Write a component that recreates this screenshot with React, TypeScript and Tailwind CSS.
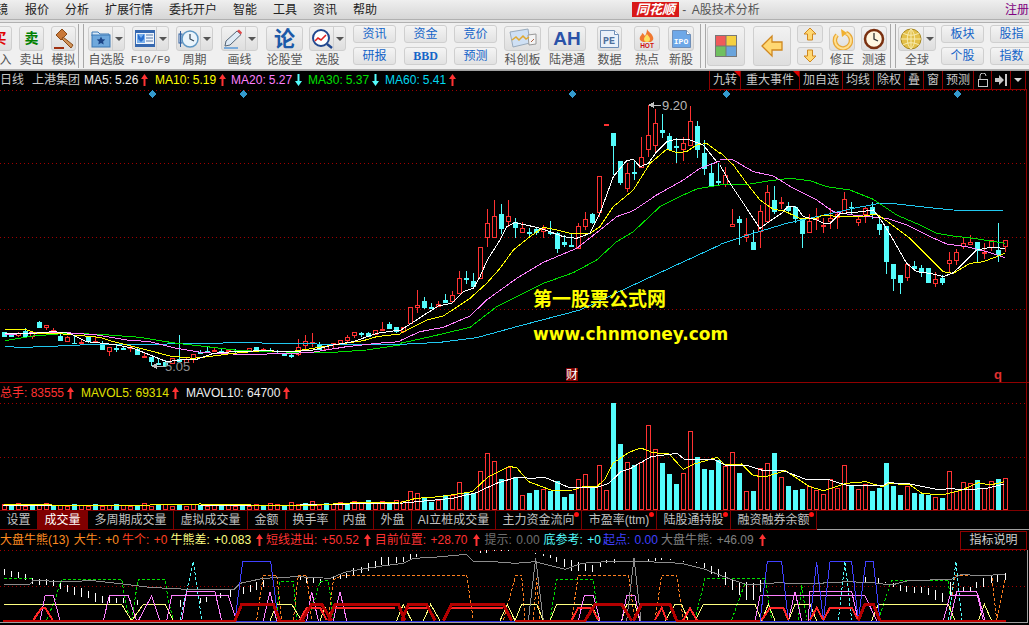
import type { ReactNode } from "react";

type Pt = [number, number];

// chart numbers were read off the reference crops, so they are kept in crop units
// a = frame of the left crop, b = middle, c = right, d/e = indicator crops
const a = (p: Pt[]) => p.map(([x, y]) => `${x / 3},${300 + y / 3}`).join(" ");
const b = (p: Pt[]) => p.map(([x, y]) => `${400 + x / 3},${90 + y / 3}`).join(" ");
const c = (p: Pt[]) => p.map(([x, y]) => `${720 + x / 3},${90 + y / 3}`).join(" ");
const d = (p: Pt[]) => p.map(([x, y]) => `${x / 3},${500 + y / 3}`).join(" ");
const e = (p: Pt[]) => p.map(([x, y]) => `${515 + x / 3},${500 + y / 3}`).join(" ");
const v = (p: Pt[]) => p.map(([x, y]) => `${400 + x / 2.49},${380 + y / 3}`).join(" ");

// [bodyTop, bodyBottom, wickTop, wickBottom, isRed]
type Candle = [number, number, number, number, number];

const LEFT: Candle[] = [
  [96,107,96,110,0],[105,108,98,112,0],[100,104,95,112,1],[92,108,85,110,0],[100,108,95,118,1],[66,80,63,82,0],
  [76,80,74,90,1],[91,94,84,95,1],[108,119,100,120,0],[112,124,108,124,1],[128,130,108,132,0],[126,130,118,130,1],
  [112,122,110,130,0],[122,123,110,125,1],[130,148,122,150,0],[142,152,142,168,1],[143,146,135,155,0],[143,146,138,148,0],
  [142,144,135,157,1],[148,161,142,163,0],[168,170,155,170,1],[172,183,170,198,0],[190,192,178,195,0],[186,194,180,200,0],
  [175,188,175,192,1],[178,183,105,185,0],[176,186,172,190,1],[162,178,162,188,1],[157,158,150,162,0],[154,155,140,157,0],
  [150,152,140,157,1],[153,155,148,158,0],[150,152,148,160,1],[152,154,148,162,0],[150,153,150,157,1],[143,150,143,157,1],
  [142,150,142,152,0],[148,150,145,153,1],[149,151,143,155,0],[152,154,150,158,0],[158,166,158,168,0],[166,168,160,175,0],
  [142,162,117,167,1],[124,136,105,148,1],[127,130,100,140,1],[136,146,126,150,0],[138,148,138,150,1],[130,132,128,148,1],
  [121,133,121,135,1],[112,120,105,125,1],[97,105,97,115,1],[99,101,97,112,0],[99,108,97,110,0],[91,102,91,105,1],
  [86,88,65,88,1],[72,84,66,88,0],[82,93,82,100,0],
];

const RIGHT: Candle[] = [
  [712,724,710,730,1],[652,700,650,700,1],[646,650,600,668,1],[633,652,620,658,0],[652,655,638,658,0],[642,648,633,652,1],
  [630,635,612,640,0],[615,632,603,640,1],[565,610,543,610,1],[565,568,543,582,0],[574,588,548,590,0],[470,565,470,565,1],
  [400,440,358,470,1],[378,440,330,442,1],[372,414,342,432,0],[379,392,330,410,1],[397,410,384,443,0],[415,425,395,425,1],
  [425,428,415,445,0],[417,426,412,435,0],[415,422,405,445,1],[425,430,393,434,0],[430,473,425,490,0],[456,462,436,470,0],
  [464,468,430,470,0],[409,475,400,475,1],[388,409,365,420,1],[372,396,368,402,0],[259,367,259,380,1],[102,104,102,104,1],
  [129,164,129,255,0],[213,276,213,286,0],[249,293,220,305,1],[245,248,212,270,0],[202,232,142,232,1],[136,176,45,200,1],
  [99,164,57,190,1],[120,126,72,145,0],[139,178,130,180,0],[168,172,145,218,0],[160,176,140,212,1],[94,164,48,165,1],
  [108,177,93,205,0],[189,235,150,255,0],[249,288,220,292,0],[274,277,220,285,0],[255,283,230,290,1],[403,407,357,407,1],
  [387,396,377,465,0],[432,442,385,455,1],[456,477,420,477,0],[364,424,345,473,1],[307,392,285,395,1],[330,364,288,372,0],
  [336,339,322,358,1],[348,360,336,372,0],[351,385,348,400,0],[388,428,385,473,0],[394,425,372,425,1],[384,388,354,420,1],
  [404,406,384,428,1],[385,393,355,417,1],[372,380,362,417,1],[328,370,306,372,1],[350,352,337,372,0],[388,395,375,408,1],
  [354,372,352,400,1],[352,372,335,387,0],[403,417,375,435,0],[408,513,408,552,0],[522,564,522,603,0],[555,576,555,612,0],
  [522,560,518,572,1],[528,535,513,542,0],[534,543,525,560,0],[534,576,534,576,0],[568,578,545,590,1],[564,575,555,585,0],
  [511,518,487,550,1],[487,509,478,525,1],[460,468,445,477,1],[457,462,435,465,1],[457,480,457,517,0],[487,490,460,507,1],
  [449,472,449,482,1],[480,492,400,515,0],[451,467,451,485,1],
];

const VOL_RIGHT: [number, number][] = [
  [362,1],[332,1],[338,1],[352,0],[366,0],[360,1],[346,0],[346,1],[307,1],[340,0],[338,0],[274,1],[220,1],[244,1],[297,0],
  [260,1],[292,0],[344,1],[339,0],[330,0],[327,1],[332,0],[304,0],[351,0],[342,0],[298,1],[283,1],[320,0],[256,1],[331,1],
  [70,0],[192,0],[247,1],[256,0],[247,1],[136,1],[208,1],[250,0],[282,0],[312,0],[280,1],[154,1],[232,0],[267,0],[270,0],
  [240,0],[258,1],[217,1],[279,0],[334,1],[333,0],[265,1],[250,1],[219,0],[292,1],[318,0],[330,0],[327,0],[318,1],[330,1],
  [343,1],[298,1],[323,1],[256,1],[316,0],[328,1],[313,1],[333,0],[324,0],[250,0],[318,0],[345,0],[319,1],[339,0],[342,0],
  [345,0],[352,1],[354,0],[274,1],[333,1],[307,1],[310,1],[300,0],[325,1],[304,1],[297,0],[295,1],
];

const VOL_LEFT = [5,4,6,3,5,4,6,3,4,3,5,4,3,5,3,4,5,4,3,4,6,3,4,5,3,4,3,5,4,3,4,3,5,3,4,3,5,4,6,5,4,7,5,6,8,4,6,5,7,6,8,7,9,6,8,7,9];

const STICKS_D: [number, number, number][] = [
  [14,207,225],[35,213,232],[56,215,235],[77,222,240],[98,235,252],[119,236,255],[140,238,256],[161,240,258],[182,248,268],
  [203,255,275],[224,262,285],[245,265,290],[266,272,295],[287,280,305],[308,288,308],[329,290,310],[350,293,310],[371,293,310],
  [392,300,312],[413,300,315],[540,300,320],[600,295,310],[620,290,305],[660,280,295],[690,270,290],[730,262,282],[750,255,275],
  [770,245,270],[790,240,260],[900,228,240],[920,235,250],[940,235,250],[960,238,250],[1000,228,240],[1020,222,238],[1040,218,235],
  [1060,205,225],[1085,200,220],[1105,190,212],[1125,182,205],[1145,172,195],[1165,172,195],[1190,172,190],[1210,170,187],
  [1230,162,178],[1250,162,172],[1440,152,160],[1460,150,158],[1482,150,154],[1503,150,153],[1524,150,153],
];

const STICKS_E: [number, number, number][] = [
  [20,158,160],[40,158,160],[60,160,163],[85,163,168],[105,165,175],[125,170,185],[148,178,200],[170,180,212],[190,185,212],
  [212,190,213],[232,195,215],[255,190,200],[275,180,188],[297,178,190],[400,178,185],[420,175,182],[440,175,180],[465,176,179],
  [505,183,186],[545,185,188],[568,190,205],[590,198,222],[610,208,232],[632,215,255],[652,235,270],[672,245,285],[693,245,300],
  [714,250,300],[735,240,275],[1050,232,245],[1090,235,248],[1110,245,250],[1135,250,262],[1155,255,272],[1175,258,275],
  [1197,262,278],[1218,262,280],[1240,265,285],[1262,270,300],[1283,280,305],[1305,245,285],[1345,262,275],[1365,260,272],
  [1385,245,265],[1405,235,262],[1428,228,250],[1448,225,245],[1470,220,240],
];

const CYAN = "#54fcfc";
const RED = "#ff3232";

function Bar({ x, y, bottom, red }: { x: number; y: number; bottom: number; red: number }) {
  const top = Math.round(y);
  return red ? (
    <rect x={x - 2} y={top + 0.5} width={4} height={Math.max(1, bottom - top - 1)} fill="#000" stroke={RED} />
  ) : (
    <rect x={x - 2.5} y={top} width={5} height={Math.max(1, bottom - top)} fill={CYAN} />
  );
}

function CandleMark({ k, data }: { k: number; data: { t: number; b: number; wt: number; wb: number; red: number } }) {
  const x = 403.5 + 7 * k;
  const color = data.red ? RED : CYAN;
  return (
    <g>
      <line x1={x} x2={x} y1={data.wt} y2={data.t} stroke={color} />
      <line x1={x} x2={x} y1={data.b} y2={data.wb} stroke={color} />
      <Bar x={x} y={data.t} bottom={Math.round(data.b) + 1} red={data.red} />
    </g>
  );
}

function Arrow({ down, color = "#ff3232" }: { down?: boolean; color?: string }) {
  return (
    <svg width="7" height="12" viewBox="0 0 7 12" className="shrink-0">
      <path d={down ? "M2.500 0h2v7H7L3.500 12 0 7h2.500z" : "M3.500 0 7 5H4.500v7h-2V5H0z"} fill={color} />
    </svg>
  );
}

function Tool({ w, className = "", label, icon, drop, mono }: { w: string; className?: string; label: string; icon: ReactNode; drop?: boolean; mono?: boolean }) {
  return (
    <div className={`flex shrink-0 flex-col items-center ${w} ${className}`}>
      <div className="mt-[3px] flex h-[25px] w-full items-center rounded-[3px] border border-[#cfcfcf] bg-gradient-to-b from-[#f2f2f2] to-[#dedede]">
        <div className="flex flex-1 items-center justify-center">{icon}</div>
        {drop && (
          <div className="flex h-full w-[12px] items-center justify-center border-l border-[#cfcfcf]">
            <div className="h-0 w-0 border-x-[4px] border-t-[4px] border-x-transparent border-t-[#555]" />
          </div>
        )}
      </div>
      <span className={`mt-[2px] whitespace-nowrap leading-[14px] text-[#555] ${mono ? "font-['Liberation_Mono',monospace] text-[11px]" : "text-[12px]"}`}>{label}</span>
    </div>
  );
}

function TextPair({ top, bottom, className = "", boldBottom }: { top: string; bottom: string; className?: string; boldBottom?: boolean }) {
  const box = "flex h-[18px] w-full items-center justify-center rounded-[3px] border border-[#cfcfcf] bg-gradient-to-b from-[#f4f4f4] to-[#e2e2e2] text-[12px] text-[#1464c8]";
  return (
    <div className={`mt-[2px] flex w-[43px] shrink-0 flex-col gap-[4px] ${className}`}>
      <div className={box}>{top}</div>
      <div className={`${box} ${boldBottom ? "font-['Liberation_Serif',serif] font-bold" : ""}`}>{bottom}</div>
    </div>
  );
}

function Grip({ className = "" }: { className?: string }) {
  return <div className={`mt-[1px] h-[44px] w-[6px] shrink-0 border-x border-[#a8a8a8] ${className}`} />;
}

const Folder = () => (
  <svg width="20" height="18" viewBox="0 0 20 18">
    <path d="M1 2h6l2 2h9v2H1z" fill="#d8e8f6" stroke="#3b78b5" />
    <rect x="1" y="5" width="18" height="12" fill="#6fa8dc" stroke="#3b78b5" />
    <path d="M10 6.500l1.300 2.700 3 .4-2.200 2 .6 3L10 13.100l-2.700 1.500.6-3-2.200-2 3-.4z" fill="#1c4587" />
  </svg>
);
const DocWin = () => (
  <svg width="20" height="17" viewBox="0 0 20 17">
    <rect x="0.500" y="0.500" width="19" height="16" fill="#eef4fb" stroke="#3568b0" />
    <rect x="1" y="1" width="18" height="2" fill="#3568b0" />
    <path d="M2 4h8v9H2z" fill="#7ab0ec" />
    <path d="M3 4l3 4 3-4v5l-3 3-3-3z" fill="#2a70d0" />
    <path d="M11 5h7M11 8h7M11 11h7" stroke="#5578a8" />
    <rect x="1" y="14" width="18" height="2" fill="#3568b0" />
  </svg>
);
const ClockIcon = () => (
  <svg width="21" height="20" viewBox="0 0 21 20">
    <rect x="1" y="5" width="3" height="9" fill="#fff" stroke="#2f5f9f" />
    <path d="M2.500 2v16" stroke="#2f5f9f" />
    <circle cx="12" cy="10" r="8" fill="#eaf4fb" stroke="#5e97c4" strokeWidth="1.500" />
    <path d="M12 5v5l4 2" stroke="#345" strokeWidth="1.200" fill="none" />
  </svg>
);
const PencilIcon = () => (
  <svg width="21" height="20" viewBox="0 0 21 20">
    <path d="M2 17l1-5L14 2l4 3.500L7 16z" fill="#dfeaf5" stroke="#567" />
    <path d="M14 2l4 3.500 1-2-3-3z" fill="#e04848" />
    <path d="M1 19h14" stroke="#5a9ad8" strokeWidth="1.500" />
  </svg>
);
const SearchIcon = () => (
  <svg width="22" height="21" viewBox="0 0 22 21">
    <circle cx="10" cy="10" r="8" fill="#fff" stroke="#21478f" strokeWidth="2" />
    <path d="M4 13l3-3 3 2 5-5" stroke="#e02020" strokeWidth="1.600" fill="none" />
    <path d="M16 16l5 4" stroke="#21478f" strokeWidth="2.500" />
  </svg>
);
const Gavel = () => (
  <svg width="22" height="22" viewBox="0 0 22 22">
    <path d="M3 7l6-6 5 5-6 6z" fill="#c87838" stroke="#8a4a18" />
    <path d="M10 9l10 8-2 3-9-9z" fill="#d0955a" stroke="#8a4a18" />
    <rect x="1" y="19" width="10" height="2" fill="#a03010" />
  </svg>
);
const ChartCard = () => (
  <svg width="28" height="21" viewBox="0 0 28 21">
    <path d="M1 4l18-3 2 14-17 4z" fill="#cfe0f4" stroke="#9ab" />
    <path d="M19 7l8-1v10l-7 1z" fill="#f4f4f4" stroke="#999" />
    <path d="M3 12l4-3 3 3 4-4 3 3 3-2" stroke="#e0a830" fill="none" strokeWidth="1.500" />
    <path d="M22 14l3-3" stroke="#b06040" />
  </svg>
);
const PageIcon = ({ children, fill, ink, size }: { children: string; fill: string; ink: string; size: number }) => (
  <svg width="21" height="20" viewBox="0 0 21 20">
    <path d="M1.500 1.500h14l4 4v13h-18z" fill={fill} stroke="#6f8fb8" />
    <path d="M15.500 1.500v4h4" fill="#fff" stroke="#6f8fb8" />
    <text x="10" y="15" textAnchor="middle" fill={ink} fontSize={size} fontWeight="bold" fontFamily="Liberation Mono">{children}</text>
  </svg>
);
const Hot = () => (
  <svg width="18" height="21" viewBox="0 0 18 21">
    <path d="M9 1c1 3 5 4 6 8 1 3-1 4-2 5H5c-2-1-4-2-3-5 1-2 2-2 2-4 2 1 2 2 3 3 1-2 2-4 2-7z" fill="#f07830" />
    <path d="M9 6c1 2 3 3 3 5s-1 3-3 3-3-1-3-3 2-3 3-5z" fill="#fce060" />
    <text x="9" y="20" textAnchor="middle" fill="#d01010" fontSize="6.500" fontWeight="bold" fontFamily="Liberation Sans">HOT</text>
  </svg>
);
const ColorGrid = () => (
  <svg width="22" height="22" viewBox="0 0 22 22">
    <rect x="0" y="0" width="22" height="22" fill="#777" />
    <rect x="1" y="1" width="9.500" height="9.500" fill="#f05a5a" />
    <rect x="11.500" y="1" width="9.500" height="9.500" fill="#f5d040" />
    <rect x="1" y="11.500" width="9.500" height="9.500" fill="#70c060" />
    <rect x="11.500" y="11.500" width="9.500" height="9.500" fill="#6aa4dc" />
  </svg>
);
const GoldArrow = ({ dir }: { dir: "left" | "up" | "down" }) => {
  if (dir === "left")
    return (
      <svg width="22" height="24" viewBox="0 0 22 24">
        <path d="M1 12 11 2v6h10v8H11v6z" fill="#ffd873" stroke="#d08820" strokeWidth="1.300" />
      </svg>
    );
  return (
    <svg width="14" height="14" viewBox="0 0 14 14">
      <path d={dir === "up" ? "M7 1l6 6H9.500v6h-5V7H1z" : "M7 13l6-6H9.500V1h-5v6H1z"} fill="#ffd873" stroke="#d08820" />
    </svg>
  );
};
const Refresh = () => (
  <svg width="22" height="22" viewBox="0 0 22 22">
    <path d="M6 7a8 8 0 1 0 9-2" fill="none" stroke="#e8a838" strokeWidth="4.500" />
    <path d="M6 7a8 8 0 1 0 9-2" fill="none" stroke="#ffe090" strokeWidth="2" />
    <path d="M10 1l6 4-5 4z" fill="#f0b030" />
  </svg>
);
const BrownClock = () => (
  <svg width="22" height="22" viewBox="0 0 22 22">
    <circle cx="11" cy="11" r="9" fill="#fff6e0" stroke="#7a3010" strokeWidth="2.500" />
    <path d="M11 5v6l4 2" stroke="#333" strokeWidth="1.300" fill="none" />
  </svg>
);
const Globe = () => (
  <svg width="22" height="22" viewBox="0 0 22 22">
    <circle cx="11" cy="11" r="10" fill="#e3c04a" stroke="#a88820" />
    <path d="M1 11h20M11 1v20M3 5c5 3 11 3 16 0M3 17c5-3 11-3 16 0M11 1c-5 5-5 15 0 20M11 1c5 5 5 15 0 20" stroke="#f8ecb0" fill="none" />
  </svg>
);

const MENU = ["报价", "分析", "扩展行情", "委托开户", "智能", "工具", "资讯", "帮助"];

const MA = [
  { name: "MA5", value: "5.26", color: "text-[#f0f0f0]", w: "w-[66px]", down: false },
  { name: "MA10", value: "5.19", color: "text-[#ffff00]", w: "w-[71px]", down: false },
  { name: "MA20", value: "5.27", color: "text-[#ff80ff]", w: "w-[72px]", down: true },
  { name: "MA30", value: "5.37", color: "text-[#00e000]", w: "w-[72px]", down: true },
  { name: "MA60", value: "5.41", color: "text-[#00d8f0]", w: "w-[72px]", down: false },
];

const CHART_TABS = [
  { label: "九转", w: "w-[31px]", mark: true },
  { label: "重大事件", w: "w-[59px]", mark: true },
  { label: "加自选", w: "w-[43px]" },
  { label: "均线", w: "w-[31px]" },
  { label: "除权", w: "w-[31px]" },
  { label: "叠", w: "w-[19px]" },
  { label: "窗", w: "w-[19px]" },
  { label: "预测", w: "w-[31px]" },
];

const BOTTOM_TABS = [
  { label: "设置", w: "w-[38px]" },
  { label: "成交量", w: "w-[50px]", active: true },
  { label: "多周期成交量", w: "w-[86px]" },
  { label: "虚拟成交量", w: "w-[74px]" },
  { label: "金额", w: "w-[38px]" },
  { label: "换手率", w: "w-[50px]" },
  { label: "内盘", w: "w-[38px]" },
  { label: "外盘", w: "w-[38px]" },
  { label: "AI立桩成交量", w: "w-[84px]" },
  { label: "主力资金流向", w: "w-[86px]", dot: true },
  { label: "市盈率(ttm)", w: "w-[75px]", dot: true },
  { label: "陆股通持股", w: "w-[74px]", dot: true },
  { label: "融资融券余额", w: "w-[86px]", dot: true },
];

const Grid = ({ ys }: { ys: number[] }) => (
  <>
    {ys.map((y) => (
      <line key={y} x1="0" x2="1026" y1={y + 0.5} y2={y + 0.5} stroke="#a00000" strokeDasharray="1 3" />
    ))}
  </>
);

const Line = ({ pts, color, w = 1, dash }: { pts: string; color: string; w?: number; dash?: string }) => (
  <polyline points={pts} fill="none" stroke={color} strokeWidth={w} strokeDasharray={dash} />
);

function MainChart() {
  return (
    <svg viewBox="0 89 1029 293" shapeRendering="crispEdges" className="block h-[293px] w-full shrink-0">
      <Grid ys={[90, 163, 237, 309]} />
      {[152, 243, 572, 726, 957].map((x) => (
        <path key={x} d={`M${x} 90l4 4-4 4-4-4z`} fill="#3399cc" />
      ))}
      {LEFT.map((q, i) => (
        <CandleMark key={i} k={i - 57} data={{ t: 300 + q[0] / 3, b: 300 + q[1] / 3, wt: 300 + q[2] / 3, wb: 300 + q[3] / 3, red: q[4] }} />
      ))}
      {RIGHT.map((q, i) => (
        <CandleMark key={i} k={i} data={{ t: 90 + q[0] / 3, b: 90 + q[1] / 3, wt: 90 + q[2] / 3, wb: 90 + q[3] / 3, red: q[4] }} />
      ))}
      {/* MA60 */}
      <Line color="#20c8f0" pts={a([[14,140],[70,142],[130,140],[240,135],[350,133],[500,132],[620,130],[720,128],[850,130],[1000,133],[1200,133]])} />
      <Line color="#20c8f0" pts={b([[0,763],[120,757],[230,743],[350,710],[540,660],[700,585],[840,520],[960,465]])} />
      <Line color="#20c8f0" pts={c([[0,463],[100,430],[200,400],[300,378],[400,355],[480,340],[530,342],[620,352],[700,360],[850,362]])} />
      {/* MA30 */}
      <Line color="#00e000" pts={a([[14,122],[100,108],[200,100],[300,103],[420,112],[530,130],[620,140],[720,152],[850,156],[1000,157],[1100,150],[1200,135]])} />
      <Line color="#00e000" pts={b([[0,760],[100,738],[210,712],[290,650],[430,580],[520,548],[590,510],[650,455],[700,425],[780,350],[850,315],[890,297],[960,285]])} />
      <Line color="#00e000" pts={c([[0,283],[90,282],[150,272],[210,265],[270,272],[320,290],[390,300],[460,328],[530,375],[600,405],[650,430],[700,438],[760,445],[855,460]])} />
      {/* MA20 */}
      <Line color="#ff80ff" pts={a([[14,105],[100,98],[200,98],[290,105],[380,120],[450,125],[530,145],[610,158],[700,162],[800,162],[930,158],[1040,140],[1130,130],[1200,125]])} />
      <Line color="#ff80ff" pts={b([[0,752],[60,725],[130,712],[210,678],[260,630],[350,565],[430,517],[530,475],[600,420],[650,380],[700,362],[770,315],[850,270],[900,235],[960,213]])} />
      <Line color="#ff80ff" pts={c([[0,208],[40,210],[100,245],[160,258],[220,295],[290,330],[340,365],[400,375],[500,385],[560,405],[620,435],[680,462],[740,470],[800,485],[855,503]])} />
      {/* MA10 */}
      <Line color="#ffff00" pts={a([[14,88],[80,90],[110,100],[170,100],[220,105],[300,112],[340,125],[400,140],[460,155],[510,168],[580,175],[640,168],[700,160],[790,152],[870,155],[920,148],[1000,135],[1090,122],[1130,110],[1200,102]])} />
      <Line color="#ffff00" pts={b([[0,730],[80,690],[130,678],[210,625],[260,580],[300,535],[340,480],[390,440],[430,412],[470,420],[510,430],[570,430],[600,410],[640,350],[700,300],[750,220],[800,178],[830,188],[860,185],[890,165],[920,160],[960,190]])} />
      <Line color="#ffff00" pts={c([[0,187],[40,225],[80,280],[120,330],[160,358],[190,362],[240,385],[290,385],[310,375],[360,380],[420,380],[470,372],[510,400],[570,445],[620,495],[670,545],[700,550],[750,520],[790,515],[830,500],[855,490]])} />
      {/* MA5 */}
      <Line color="#ffffff" pts={a([[14,100],[60,100],[100,100],[160,95],[210,100],[260,125],[310,130],[350,135],[400,145],[450,165],[500,185],[540,180],[590,178],[640,160],[700,155],[790,152],[880,155],[940,150],[1000,135],[1060,125],[1130,100],[1200,90]])} />
      <Line color="#ffffff" pts={b([[0,722],[80,670],[115,648],[155,640],[190,605],[220,595],[240,560],[262,510],[300,450],[320,410],[345,398],[410,412],[450,425],[490,440],[530,445],[570,430],[600,370],[640,260],[680,212],[700,208],[720,230],[745,220],[770,185],[800,155],[830,147],[870,150],[910,165],[950,215]])} />
      <Line color="#ffffff" pts={c([[0,225],[30,280],[80,355],[120,415],[140,400],[185,370],[205,348],[230,352],[250,380],[290,390],[310,400],[330,400],[360,370],[400,368],[460,360],[490,400],[520,450],[560,520],[590,545],[630,550],[670,560],[700,548],[730,520],[770,480],[810,472],[855,475]])} />
      {/* high and low labels */}
      <path d="M649 105h12M649 105l4-2v4z" stroke="#c0c0c0" fill="#c0c0c0" />
      <text x="662" y="110" fill="#b8b8b8" fontSize="13" fontFamily="Liberation Sans">9.20</text>
      <path d="M152 366h13M152 366l4-2v4z" stroke="#c0c0c0" fill="#c0c0c0" />
      <text x="165" y="371" fill="#909090" fontSize="13" fontFamily="Liberation Sans">5.05</text>
      <rect x="566" y="368" width="12" height="13" fill="#800000" />
      <text x="566" y="379" fill="#fff" fontSize="12" fontFamily="Noto Sans CJK SC">财</text>
      <text x="994" y="379" fill="#e03030" fontSize="13" fontWeight="bold" fontFamily="Liberation Sans">q</text>
    </svg>
  );
}

function VolumeChart() {
  return (
    <svg viewBox="0 402 1029 108" shapeRendering="crispEdges" className="block h-[108px] w-full shrink-0">
      <Grid ys={[403, 457]} />
      {VOL_LEFT.map((h, i) => (
        <Bar key={i} x={403.5 + 7 * (i - 57)} y={509 - h} bottom={510} red={i % 3 !== 1 ? 1 : 0} />
      ))}
      {VOL_RIGHT.map(([top, red], i) => (
        <Bar key={i} x={403.5 + 7 * i} y={380 + top / 3} bottom={510} red={red} />
      ))}
      <polyline points="3,506 100,505 200,505 300,505 350,504 400,503" fill="none" stroke="#fff" />
      <polyline points="3,504 100,506 200,504 300,506 350,503 400,502" fill="none" stroke="#ff0" />
      <Line color="#ffff00" pts={v([[0,368],[40,355],[100,350],[180,335],[220,290],[270,260],[290,262],[320,305],[380,332],[430,330],[460,318],[490,320],[510,298],[530,250],[570,217],[600,204],[630,218],[670,222],[705,268],[730,253],[790,232],[810,255],[850,252],[880,287],[910,290],[960,272],[1020,320],[1055,332],[1110,310],[1160,305],[1200,320],[1220,310],[1270,315],[1300,340],[1350,345],[1400,330],[1440,308],[1470,315],[1505,305]])} />
      <Line color="#ffffff" pts={v([[0,370],[130,355],[190,338],[240,310],[290,292],[330,295],[360,292],[420,322],[490,322],[520,310],[550,275],[575,265],[625,230],[690,220],[710,240],[780,238],[810,255],[860,255],[900,270],[950,270],[1010,298],[1070,300],[1110,315],[1200,318],[1215,308],[1270,312],[1345,330],[1370,325],[1400,330],[1460,325],[1505,312]])} />
    </svg>
  );
}

function IndicatorChart() {
  const PINK = "#ff80ff";
  const BLUE = "#4040ff";
  const GREEN = "#00e000";
  const ORANGE = "#ff8020";
  const PALE = "#ffff80";
  const BRIGHT = "#ff2828";
  const DARK = "#b40000";
  return (
    <svg viewBox="0 550 1029 75" shapeRendering="crispEdges" className="block h-[75px] w-full shrink-0">
      <Grid ys={[550, 586]} />
      {STICKS_D.map(([x, t, bt]) => (
        <line key={x} x1={x / 3} x2={x / 3} y1={500 + t / 3} y2={500 + bt / 3} stroke="#fff" />
      ))}
      {STICKS_E.map(([x, t, bt]) => (
        <line key={x} x1={515 + x / 3} x2={515 + x / 3} y1={500 + t / 3} y2={500 + bt / 3} stroke="#fff" />
      ))}
      {/* dashed */}
      {[[[12,235],[100,235]],[[140,360],[165,300],[180,250],[185,237],[365,237],[375,300],[390,360]],[[395,360],[410,265],[415,237],[495,237],[505,300],[520,360]],[[830,360],[838,245],[880,245],[890,360]],[[935,330],[960,245],[985,240],[990,280],[1000,360]]].map((p, i) => (
        <Line key={i} color={GREEN} dash="3 2" pts={d(p as Pt[])} />
      ))}
      {[[[105,360],[125,237],[235,237],[250,360]],[[540,360],[570,235],[750,235],[770,360]],[[1090,360],[1130,240],[1300,240],[1310,360]],[[650,360],[690,250]],[[850,360],[860,255],[875,360]]].map((p, i) => (
        <Line key={i} color={GREEN} dash="3 2" pts={e(p as Pt[])} />
      ))}
      {[[[770,360],[790,225],[830,225],[845,360]],[[880,360],[895,225],[920,225],[935,360]],[[985,360],[1000,240],[1030,225],[1400,225],[1420,360]],[[1510,360],[1545,235]]].map((p, i) => (
        <Line key={i} color={ORANGE} dash="3 2" pts={d(p as Pt[])} />
      ))}
      {[[[0,225],[20,225],[30,360]],[[55,360],[65,235],[75,360]],[[170,360],[190,225],[340,225],[360,360]],[[420,360],[440,225],[485,225],[505,360]],[[1300,360],[1320,225],[1430,225],[1445,360],[1470,240]]].map((p, i) => (
        <Line key={i} color={ORANGE} dash="3 2" pts={e(p as Pt[])} />
      ))}
      <Line color={CYAN} dash="3 2" pts={d([[540,360],[580,185],[605,360]])} />
      <Line color={CYAN} dash="3 2" pts={e([[970,360],[990,185],[1010,360]])} />
      <Line color={CYAN} dash="3 2" pts={e([[1300,360],[1323,185],[1340,360]])} />
      {/* pale yellow */}
      {[[[12,313],[365,313],[395,362],[430,313],[495,313],[520,362]],[[810,362],[830,313],[875,313],[905,362]],[[960,362],[975,320],[990,362]],[[1190,362],[1210,313],[1235,362]],[[1270,362],[1292,313],[1320,362]],[[1500,362],[1522,313],[1545,362]]].map((p, i) => (
        <Line key={i} color={PALE} pts={d(p as Pt[])} />
      ))}
      {[[[0,362],[20,313],[65,313],[85,362]],[[105,362],[125,313],[230,313],[250,362]],[[320,362],[335,313],[360,313],[375,362]],[[450,362],[480,313],[500,313],[520,362]],[[540,362],[565,313],[720,313],[740,362],[760,313],[780,362]],[[820,362],[840,313],[885,313],[905,362]],[[1070,362],[1090,313],[1300,313],[1320,362]],[[1390,362],[1408,313],[1430,362]]].map((p, i) => (
        <Line key={i} color={PALE} pts={e(p as Pt[])} />
      ))}
      {/* pink */}
      {[[[120,362],[135,287],[160,287],[180,362]],[[310,362],[328,287],[385,287],[410,362]],[[415,362],[455,287],[480,362]],[[500,362],[515,287],[685,287],[710,362]],[[545,362],[560,275],[645,275],[665,362]],[[790,362],[810,275],[830,362]],[[920,362],[935,275],[955,362]],[[1000,362],[1020,275],[1040,362]]].map((p, i) => (
        <Line key={i} color={PINK} pts={d(p as Pt[])} />
      ))}
      {[[[190,362],[208,287],[235,287],[255,362]],[[320,362],[335,287],[360,287],[375,362]],[[720,362],[735,287],[1050,287],[1085,362]],[[880,362],[885,275],[1010,275],[1030,362]],[[820,362],[840,275],[860,362]],[[1285,362],[1305,287],[1390,287],[1410,362]],[[1305,362],[1325,275],[1385,275],[1405,362]]].map((p, i) => (
        <Line key={i} color={PINK} pts={e(p as Pt[])} />
      ))}
      {/* gray line with its two spikes */}
      <Line color="#8c8c8c" pts={d([[12,253],[50,255],[90,253],[100,240],[180,245],[280,242],[370,252],[450,262],[560,268],[700,270],[720,250],[790,235],[890,230],[990,235],[1040,215],[1130,200],[1210,190],[1240,175],[1300,172],[1400,163],[1420,185],[1480,185],[1545,190]])} />
      <Line color="#8c8c8c" pts={e([[0,190],[60,185],[150,208],[200,190],[300,183],[355,183],[500,190],[570,208],[640,235],[700,255],[790,248],[870,252],[1000,245],[1070,248],[1130,255],[1180,242],[1310,238],[1340,223],[1400,228],[1470,222]])} />
      <Line color="#8c8c8c" pts={e([[40,362],[62,175],[85,362]])} />
      <Line color="#8c8c8c" pts={e([[335,362],[357,175],[378,362]])} />
      {/* blue */}
      <Line color={BLUE} pts={d([[705,362],[728,185],[812,185],[835,362]])} />
      {[[[735,362],[757,185],[800,185],[820,362]],[[885,362],[905,185],[925,362]],[[925,362],[945,185],[1010,185],[1030,362]],[[1030,362],[1052,185],[1075,185],[1095,362]]].map((p, i) => (
        <Line key={i} color={BLUE} pts={e(p as Pt[])} />
      ))}
      {/* bright red */}
      {[[[100,360],[125,323],[135,323],[158,360]],[[900,360],[920,323],[960,323],[980,360]],[[1000,323],[1185,323]],[[1220,323],[1280,323]],[[1350,323],[1510,323]]].map((p, i) => (
        <Line key={i} color={BRIGHT} w={2} pts={d(p as Pt[])} />
      ))}
      {[[[170,360],[190,323],[230,323],[250,360]],[[420,360],[440,323],[455,360]],[[505,360],[525,325],[545,360]],[[740,360],[765,323],[805,323],[820,360]],[[885,360],[905,323],[925,360]],[[925,360],[945,323],[1010,323],[1030,360]]].map((p, i) => (
        <Line key={i} color={BRIGHT} w={2} pts={e(p as Pt[])} />
      ))}
      {/* dark red */}
      {[[[705,362],[725,313],[820,313],[840,362]],[[905,362],[935,313],[965,313],[995,362]],[[985,362],[1005,313],[1195,313],[1215,362]],[[1205,362],[1225,313],[1280,313],[1305,362]],[[1330,362],[1355,313],[1510,313],[1535,362]]].map((p, i) => (
        <Line key={i} color={DARK} w={3} pts={d(p as Pt[])} />
      ))}
      {[[[210,362],[240,313],[320,313],[350,362]],[[355,362],[380,313],[465,313],[485,362]],[[1030,362],[1050,313],[1075,313],[1095,362]]].map((p, i) => (
        <Line key={i} color={DARK} w={3} pts={e(p as Pt[])} />
      ))}
      {/* base line */}
      <line x1="3" x2="1006" y1="621.500" y2="621.500" stroke="#3030e0" />
      <line x1="3" x2="236" y1="620.500" y2="620.500" stroke="#c00000" strokeWidth="2" />
      <line x1="277" x2="305" y1="620.500" y2="620.500" stroke="#c00000" strokeWidth="2" />
      <line x1="515" x2="586" y1="620.500" y2="620.500" stroke="#c00000" strokeWidth="2" />
      <line x1="676" x2="760" y1="620.500" y2="620.500" stroke="#c00000" strokeWidth="2" />
      <line x1="880" x2="1006" y1="620.500" y2="620.500" stroke="#c00000" strokeWidth="2" />
      {/* panel frame */}
      <path d="M0 622.500H1027.500V550" fill="none" stroke="#a0a0a0" />
    </svg>
  );
}

export default function App() {
  return (
    <div className="relative flex h-[625px] w-[1029px] flex-col overflow-hidden bg-black font-['Liberation_Sans','Noto_Sans_CJK_SC',sans-serif]">
      {/* Title and menu */}
      <div className="flex h-[19px] shrink-0 items-center bg-gradient-to-b from-[#efefef] to-[#d6d6d6] text-[12px] text-[#222]">
        <span className="-ml-[4px] w-[12px] overflow-hidden">镜</span>
        <div className="ml-[17px] flex gap-[16px]">
          {MENU.map((m) => (
            <span key={m}>{m}</span>
          ))}
        </div>
        <div className="ml-[255px] flex h-[15px] w-[47px] items-center justify-center bg-[#d81818] text-[13px] font-bold italic leading-none text-white">同花顺</div>
        <span className="ml-[3px] text-[12px] text-[#555] [word-spacing:3px]">- A股技术分析</span>
        <span className="ml-auto text-[12px] text-[#800080]">注册</span>
      </div>
      <div className="h-[4px] shrink-0 border-y border-[#b0b0b0] bg-[#e4e4e4]" />

      {/* Toolbar */}
      <div className="flex h-[46px] shrink-0 items-start bg-[#f0f0f0]">
        <Tool w="w-[25px]" className="-ml-[13px]" label="买入" icon={<span className="text-[14px] font-bold text-[#e00000]">买</span>} />
        <Tool w="w-[25px]" className="ml-[7px]" label="卖出" icon={<span className="text-[14px] font-bold text-[#008000]">卖</span>} />
        <Tool w="w-[25px]" className="ml-[7px]" label="模拟" icon={<Gavel />} />
        <Grip className="ml-[2px]" />
        <Tool w="w-[37px]" className="ml-[4px]" label="自选股" drop icon={<Folder />} />
        <Tool w="w-[37px]" className="ml-[7px]" label="F10/F9" mono drop icon={<DocWin />} />
        <Tool w="w-[37px]" className="ml-[7px]" label="周期" drop icon={<ClockIcon />} />
        <Tool w="w-[37px]" className="ml-[8px]" label="画线" drop icon={<PencilIcon />} />
        <Tool w="w-[37px]" className="ml-[8px]" label="论股堂" icon={<span className="text-[21px] font-bold leading-none text-[#1c5aa8]">论</span>} />
        <Tool w="w-[37px]" className="ml-[6px]" label="选股" drop icon={<SearchIcon />} />
        <TextPair className="ml-[7px]" top="资讯" bottom="研报" />
        <TextPair className="ml-[8px]" top="资金" bottom="BBD" boldBottom />
        <TextPair className="ml-[7px]" top="竞价" bottom="预测" />
        <Tool w="w-[37px]" className="ml-[7px]" label="科创板" icon={<ChartCard />} />
        <Tool w="w-[38px]" className="ml-[7px]" label="陆港通" icon={<span className="text-[19px] font-bold leading-none text-[#2a52a8]">AH</span>} />
        <Tool w="w-[25px]" className="ml-[11px]" label="数据" icon={<PageIcon fill="#eaf1fa" ink="#50709c" size={10}>PE</PageIcon>} />
        <Tool w="w-[26px]" className="ml-[12px]" label="热点" icon={<Hot />} />
        <Tool w="w-[26px]" className="ml-[8px]" label="新股" icon={<PageIcon fill="#6ea8e8" ink="#ffffff" size={8}>IPO</PageIcon>} />
        <Grip className="ml-[6px]" />
        <div className="ml-[1px] mt-[3px] flex h-[40px] w-[38px] shrink-0 items-center justify-center rounded-[3px] border border-[#cfcfcf] bg-gradient-to-b from-[#f2f2f2] to-[#dedede]">
          <ColorGrid />
        </div>
        <div className="ml-[8px] mt-[3px] flex h-[40px] w-[38px] shrink-0 items-center justify-center rounded-[3px] border border-[#cfcfcf] bg-gradient-to-b from-[#f2f2f2] to-[#dedede]">
          <GoldArrow dir="left" />
        </div>
        <div className="ml-[6px] mt-[2px] flex w-[26px] shrink-0 flex-col gap-[4px]">
          <div className="flex h-[18px] items-center justify-center rounded-[3px] border border-[#cfcfcf] bg-[#e8e8e8]"><GoldArrow dir="up" /></div>
          <div className="flex h-[18px] items-center justify-center rounded-[3px] border border-[#cfcfcf] bg-[#e8e8e8]"><GoldArrow dir="down" /></div>
        </div>
        <Tool w="w-[26px]" className="ml-[6px]" label="修正" icon={<Refresh />} />
        <Tool w="w-[26px]" className="ml-[6px]" label="测速" icon={<BrownClock />} />
        <Grip className="ml-[3px]" />
        <Tool w="w-[38px]" className="ml-[2px]" label="全球" drop icon={<Globe />} />
        <TextPair className="ml-[5px]" top="板块" bottom="个股" />
        <TextPair className="ml-[6px]" top="股指" bottom="指数" />
      </div>
      <div className="h-[1px] shrink-0 bg-[#b0b0b0]" />

      {/* Legend row of the price chart */}
      <div className="flex h-[19px] shrink-0 items-center justify-between border-t border-[#a0a0a0] text-[12px]">
        <div className="flex items-center">
          <span className="text-[#c8c8c8]">日线</span>
          <span className="ml-[8px] text-[#c8c8c8]">上港集团</span>
          <div className="ml-[4px] flex gap-[5px]">
            {MA.map((m) => (
              <div key={m.name} className={`flex items-center gap-[3px] ${m.w} ${m.color}`}>
                <span>{m.name}:</span>
                <span>{m.value}</span>
                <Arrow down={m.down} color={m.down ? "#54fcfc" : "#ff3232"} />
              </div>
            ))}
          </div>
        </div>
        <div className="mr-[3px] flex h-[19px] items-stretch border-b border-l border-[#900000] text-[#c8c8c8]">
          {CHART_TABS.map((t) => (
            <div key={t.label} className={`relative flex items-center justify-center border-r border-[#900000] ${t.w}`}>
              {t.label}
              {t.mark && <div className="absolute right-0 top-0 h-0 w-0 border-l-[6px] border-t-[6px] border-l-transparent border-t-[#e00000]" />}
            </div>
          ))}
          <div className="flex w-[18px] items-center justify-center border-r border-[#900000]">
            <svg width="12" height="14" viewBox="0 0 12 14">
              <path d="M3 6V3a3 3 0 0 1 6 0" fill="none" stroke="#c8c8c8" />
              <rect x="1.500" y="6.500" width="9" height="7" fill="none" stroke="#c8c8c8" />
            </svg>
          </div>
          <div className="flex w-[19px] items-center justify-center border-r border-[#900000]">
            <svg width="13" height="12" viewBox="0 0 13 12">
              <path d="M0 4h4V1l5 5-5 5V8H0z" fill="#c8c8c8" />
              <rect x="10" y="0" width="2" height="12" fill="#c8c8c8" />
            </svg>
          </div>
          <div className="flex w-[15px] items-center justify-center border-r border-[#900000]">
            <div className="h-0 w-0 border-x-[4px] border-t-[4px] border-x-transparent border-t-[#d8d8d8]" />
          </div>
        </div>
      </div>

      <MainChart />

      <div className="h-[20px] shrink-0 border-t border-[#900000]">
        <div className="flex h-[19px] items-center text-[12px]">
          <span className="text-[#ff3232]">总手: 83555</span>
          <span className="ml-[3px]"><Arrow /></span>
          <span className="ml-[7px] text-[#e0e000]">MAVOL5: 69314</span>
          <span className="ml-[3px]"><Arrow /></span>
          <span className="ml-[7px] text-[#f0f0f0]">MAVOL10: 64700</span>
          <span className="ml-[3px]"><Arrow /></span>
        </div>
      </div>

      <VolumeChart />

      {/* Indicator tabs */}
      <div className="flex h-[20px] shrink-0 border-t border-[#800000] text-[12px] text-[#c0c0c0]">
        {BOTTOM_TABS.map((t) => (
          <div key={t.label} className={`relative flex items-center justify-center border-b border-r border-[#800000] ${t.w} ${t.active ? "bg-[#800000] text-white" : ""}`}>
            {t.label}
            {t.dot && <div className="absolute right-[2px] top-[1px] h-[5px] w-[5px] rounded-full bg-[#ff1010]" />}
          </div>
        ))}
        <div className="flex-1 border-b border-[#a0a0a0]" />
      </div>

      {/* Legend row of the indicator */}
      <div className="flex h-[20px] shrink-0 items-center text-[12px] [word-spacing:1px]">
        <span className="text-[#ff8c20]">大盘牛熊(13) 大牛: +0</span>
        <span className="ml-[3px] text-[#ff4020]">牛个: +0</span>
        <span className="ml-[3px] text-[#ffff80]">牛熊差: +0.083</span>
        <span className="ml-[5px]"><Arrow /></span>
        <span className="ml-[3px] text-[#ff3232]">短线进出: +50.52</span>
        <span className="ml-[5px]"><Arrow /></span>
        <span className="ml-[4px] text-[#ff3232]">目前位置: +28.70</span>
        <span className="ml-[5px]"><Arrow /></span>
        <span className="ml-[5px] text-[#707070]">提示: 0.00</span>
        <span className="ml-[4px] text-[#54fcfc]">底参考: +0</span>
        <span className="ml-[2px] text-[#4040ff]">起点: 0.00</span>
        <span className="ml-[3px] text-[#808080]">大盘牛熊: +46.09</span>
        <span className="ml-[5px]"><Arrow /></span>
        <div className="ml-auto mr-[2px] flex h-[19px] w-[67px] items-center justify-center border border-[#900000] text-[#d0d0d0]">指标说明</div>
      </div>

      <IndicatorChart />

      {/* frame line over the two upper panels */}
      <div className="absolute bottom-[115px] right-[2px] top-[89px] w-px bg-[#900000]" />

      {/* watermark */}
      <div className="absolute left-[533px] top-[289px] text-[19px] font-bold leading-[22px] text-[#ffff00]">第一股票公式网</div>
      <div className="absolute left-[533px] top-[323px] font-['DejaVu_Sans',sans-serif] text-[17px] font-bold leading-[22px] text-[#ffff00]">www.chnmoney.com</div>
    </div>
  );
}
